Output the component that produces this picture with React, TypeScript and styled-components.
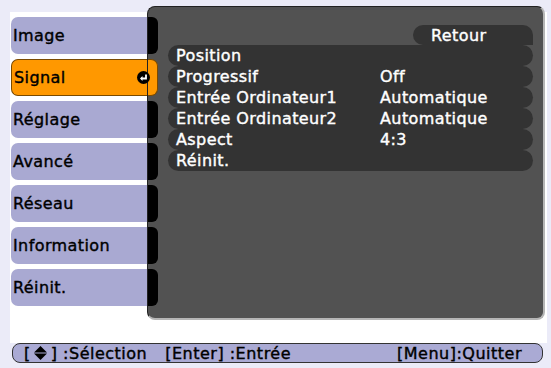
import React from "react";
import styled, { createGlobalStyle } from "styled-components";

const Global = createGlobalStyle`
  html, body { margin: 0; padding: 0; }
  body {
    background: #ebebf8;
    width: 551px;
    height: 368px;
    overflow: hidden;
    font-family: "DejaVu Sans", "Liberation Sans", sans-serif;
  }
`;

const Screen = styled.div`
  width: 551px;
  height: 368px;
  box-sizing: border-box;
  padding: 12px 4px 0 10px;
  display: flex;
  flex-direction: column;
`;

const Main = styled.div`
  background: #ffffff;
  height: 331px;
  display: flex;
  align-items: flex-start;
`;

const Menu = styled.div`
  width: 137px;
  padding: 5px 0 0 1px;
  box-sizing: border-box;
  display: flex;
  flex-direction: column;
  gap: 5px;
`;

const MenuItem = styled.div<{ $active?: boolean }>`
  height: 37px;
  box-sizing: border-box;
  display: flex;
  align-items: center;
  justify-content: space-between;
  padding-left: 2px;
  font-size: 16px;
  letter-spacing: 0.4px;
  -webkit-text-stroke: 0.4px #000;
  color: #000;
  background: ${(p) => (p.$active ? "#ff9800" : "#a9a9d2")};
  border-radius: 7px 0 0 7px;
  border: ${(p) => (p.$active ? "1px solid #7a4a00" : "none")};
  border-right: none;
  position: relative;
  z-index: 1;
`;

const EnterIcon = styled.svg`
  width: 13px;
  height: 13px;
  margin-right: -3px;
  flex: none;
`;

const Panel = styled.div`
  margin-top: -6px;
  width: 398px;
  height: 314px;
  box-sizing: border-box;
  background: #525252;
  border-top: 1px solid #222;
  border-left: 1px solid #222;
  border-right: 2px solid #b5b5b5;
  border-bottom: 2px solid #b5b5b5;
  border-radius: 8px;
  display: flex;
  overflow: hidden;
`;

const TabColumn = styled.div`
  width: 10px;
  flex: none;
  padding-top: 10px;
  display: flex;
  flex-direction: column;
  gap: 5px;
`;

const Tab = styled.div<{ $active?: boolean }>`
  height: 37px;
  box-sizing: border-box;
  background: ${(p) => (p.$active ? "#ff9800" : "#000")};
  border-radius: ${(p) => (p.$active ? "0 7px 7px 0" : "0 6px 6px 0")};
  border: ${(p) => (p.$active ? "1px solid #7a4a00" : "none")};
  border-left: none;
`;

const Content = styled.div`
  flex: 1;
  padding: 18px 10px 0 10px;
  display: flex;
  flex-direction: column;
`;

const Retour = styled.div`
  align-self: flex-end;
  width: 120px;
  height: 20px;
  box-sizing: border-box;
  background: #333;
  border-radius: 10px 10px 0 10px;
  color: #fff;
  font-size: 16px;
  letter-spacing: 0.4px;
  -webkit-text-stroke: 0.4px #fff;
  padding-left: 18px;
  display: flex;
  align-items: center;
`;

const Rows = styled.div`
  display: flex;
  flex-direction: column;
`;

const Row = styled.div`
  height: 21px;
  background: #333;
  border-radius: 10.5px;
  display: grid;
  grid-template-columns: 204px 1fr;
  align-items: center;
  padding-left: 8px;
  color: #fff;
  font-size: 16px;
  letter-spacing: 0.4px;
  -webkit-text-stroke: 0.4px #fff;
  white-space: nowrap;
`;

const Bar = styled.div`
  margin-left: 2px;
  width: 531px;
  height: 20px;
  box-sizing: border-box;
  background: #aaaad4;
  border: 1px solid #333;
  border-radius: 8px;
  display: flex;
  align-items: center;
  padding: 0 20px 0 11px;
  font-size: 16px;
  letter-spacing: 0.5px;
  -webkit-text-stroke: 0.4px #000;
  color: #000;
  white-space: nowrap;
`;

const Hint = styled.span<{ $push?: boolean }>`
  display: inline-flex;
  align-items: center;
  margin-right: 18px;
  ${(p) => (p.$push ? "margin-left: auto; margin-right: 0;" : "")}
`;

const UpDown = styled.svg`
  width: 13px;
  height: 14px;
  margin: 0 4px 0 3px;
`;

const menuItems = ["Image", "Signal", "Réglage", "Avancé", "Réseau", "Information", "Réinit."];
const rows: [string, string][] = [
  ["Position", ""],
  ["Progressif", "Off"],
  ["Entrée Ordinateur1", "Automatique"],
  ["Entrée Ordinateur2", "Automatique"],
  ["Aspect", "4:3"],
  ["Réinit.", ""],
];

export default function App() {
  return (
    <>
      <Global />
      <Screen>
        <Main>
          <Menu>
            {menuItems.map((m) => (
              <MenuItem key={m} $active={m === "Signal"}>
                <span>{m}</span>
                {m === "Signal" && (
                  <EnterIcon viewBox="0 0 13 13">
                    <circle cx="6.5" cy="6.5" r="6.5" fill="#000" />
                    <path d="M9 3.5 V7.5 H4.5" stroke="#fff" strokeWidth="1.8" fill="none" />
                    <path d="M3 7.5 L5.5 5 L5.5 10 Z" fill="#fff" />
                  </EnterIcon>
                )}
              </MenuItem>
            ))}
          </Menu>
          <Panel>
            <TabColumn>
              {menuItems.map((m) => (
                <Tab key={m} $active={m === "Signal"} />
              ))}
            </TabColumn>
            <Content>
              <Retour>Retour</Retour>
              <Rows>
                {rows.map(([k, v]) => (
                  <Row key={k}>
                    <span>{k}</span>
                    <span>{v}</span>
                  </Row>
                ))}
              </Rows>
            </Content>
          </Panel>
        </Main>
        <Bar>
          <Hint>
            [
            <UpDown viewBox="0 0 13 14">
              <path d="M6.5 0 L13 6.4 H0 Z" fill="#000" />
              <path d="M0 7.6 H13 L6.5 14 Z" fill="#000" />
            </UpDown>
            ] :Sélection
          </Hint>
          <Hint>[Enter] :Entrée</Hint>
          <Hint $push>[Menu]:Quitter</Hint>
        </Bar>
      </Screen>
    </>
  );
}
